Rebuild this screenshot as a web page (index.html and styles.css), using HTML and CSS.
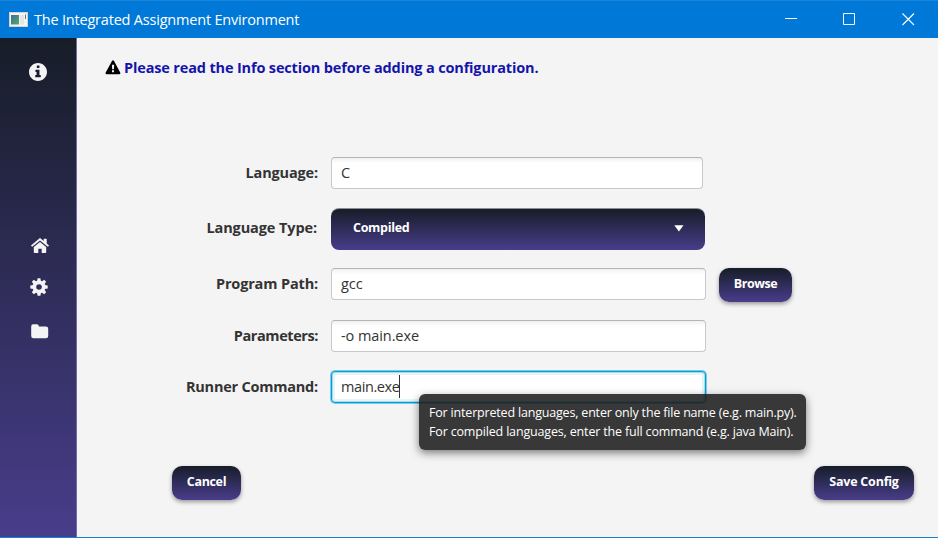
FILE: index.html
```html
<!DOCTYPE html>
<html lang="en">
<head>
<meta charset="utf-8">
<title>The Integrated Assignment Environment</title>
<link rel="stylesheet" href="styles.css">
</head>
<body>
<div class="window">
  <header class="titlebar">
    <svg class="app-icon" width="19" height="15" viewBox="0 0 19 15">
      <defs><linearGradient id="g" x1="0" y1="0" x2="1" y2="1"><stop offset="0" stop-color="#3e6e9e"/><stop offset="1" stop-color="#58a868"/></linearGradient></defs>
      <rect x=".5" y=".5" width="18" height="14" fill="#f4f4f2" stroke="#d5d3cf"/>
      <rect x="2" y="3" width="8" height="9.500" fill="url(#g)"/>
      <rect x="11" y="3" width="4" height="9.500" fill="#e3e5e7"/>
      <path d="M16.500 2.500v4.500" stroke="#4d8d75"/>
    </svg>
    <span class="title">The Integrated Assignment Environment</span>
    <div class="controls">
      <svg width="13" height="13"><path d="M0 5.500h12" stroke="#fff"/></svg>
      <svg width="13" height="13"><path d="M.5.500h11v11h-11z" fill="none" stroke="#fff"/></svg>
      <svg width="13" height="13"><path d="M.5 .5l11.500 11.500M12 .5L.5 12" stroke="#fff" stroke-width="1.100"/></svg>
    </div>
  </header>
  <div class="body">
    <nav class="sidebar">
      <svg class="info" width="18" height="18" viewBox="8 8 496 496"><path fill="#f4f4f4" d="M256 8C119 8 8 119 8 256s111 248 248 248 248-111 248-248S393 8 256 8zm-32 70h72v68h-72zM186 194h110v148h36v62H180v-62h36v-86h-30z"/></svg>
      <svg class="home" width="18" height="16" viewBox="0 0 18 16"><g fill="#f4f4f4"><path d="M9 .3c.4 0 .7.100 1 .4l2.700 2.300V1.300c0-.3.200-.5.500-.5h2c.3 0 .5.200.5.500v4.300l2 1.700c.2.200.2.400.100.600l-.6.700c-.2.200-.5.200-.7 0L9 2.500 1.500 8.600c-.2.200-.5.200-.7 0l-.6-.7c-.2-.2-.1-.5.100-.6L8 .7c.3-.3.600-.4 1-.4z"/><path d="M9 3.900l6.200 5.200v5.200c0 .5-.3.800-.8.800h-3.700v-4.400H7.300v4.400H3.600c-.5 0-.8-.3-.8-.8V9.100z"/></g></svg>
      <svg class="cog" width="18" height="18" viewBox="-9 -9 18 18"><g fill="#f4f4f4"><path fill-rule="evenodd" d="M-6.500 0a6.500 6.500 0 1 0 13 0a6.500 6.500 0 1 0-13 0zm3.700 0a2.800 2.800 0 1 1 5.600 0a2.800 2.800 0 1 1-5.600 0z"/><path id="t" d="M-2-5.500L-1.400-8.700h2.800L2-5.500zM-2 5.500L-1.400 8.700h2.800L2 5.500z"/><use href="#t" transform="rotate(45)"/><use href="#t" transform="rotate(90)"/><use href="#t" transform="rotate(135)"/></g></svg>
      <svg class="folder" width="18" height="15" viewBox="0 0 18 15"><path fill="#f4f4f4" d="M2.200.3h3.600Q7.900.3 7.900 2.400h7Q17.200 2.400 17.200 4.700v7.200Q17.200 14.200 14.900 14.200H2.400Q.2 14.200.2 11.900V2.500Q.2.300 2.200.3z"/></svg>
    </nav>
    <main class="content">
      <div class="notice">
        <svg width="16" height="15" viewBox="0 0 16 15"><path fill-rule="evenodd" d="M7.100.8Q8 -.5 8.900.8l6.300 11.700Q15.900 14 14.300 14.200H1.500Q-.1 14 .7 12.500zM6.900 4.700l.3 4.500h1.700l.3-4.500zM7 10.200v2h2v-2z"/></svg>
        <span class="t-notice">Please read the Info section before adding a configuration.</span>
      </div>
      <form class="form">
        <div class="row lang"><label class="l1">Language:</label><div class="field short"><span>C</span></div></div>
        <div class="row type"><label class="l2">Language Type:</label><div class="combo"><span>Compiled</span><svg width="10" height="7"><path d="M.3.3h9.200L4.900 6.600z" fill="#fff"/></svg></div></div>
        <div class="row path"><label class="l3">Program Path:</label><div class="field"><span>gcc</span></div><div class="btn browse"><span>Browse</span></div></div>
        <div class="row params"><label class="l4">Parameters:</label><div class="field"><span class="v4">-o main.exe</span></div></div>
        <div class="row runner"><label class="l5">Runner Command:</label><div class="field focused"><span class="v5">main.exe</span><i class="caret"></i>
          <div class="tooltip"><div><span class="tip1">For interpreted languages, enter only the file name (e.g. main.py).</span></div><div><span class="tip2">For compiled languages, enter the full command (e.g. java Main).</span></div></div></div></div>
      </form>
      <div class="actions"><div class="btn cancel"><span>Cancel</span></div><div class="btn save"><span>Save Config</span></div></div>
    </main>
  </div>
</div>
</body>
</html>
```
FILE: styles.css
```css
* { box-sizing: border-box; }
body { margin: 0; font-family: "Open Sans", "Noto Sans", sans-serif; font-size: 14.5px; color: #333; }
svg { display: block; flex: none; }
span, label { white-space: nowrap; }
.window { width: 938px; height: 538px; display: flex; flex-direction: column; background: #f4f4f4; border-bottom: 1px solid #1a80d0; overflow: hidden; }
.titlebar { height: 38px; flex: none; display: flex; align-items: center; padding-left: 9px; background: #0078d7; border-top: 1px solid #1a86db; color: #fff; }
.title { margin-left: 6px; font-size: 14.5px; letter-spacing: -.2px; }
.controls { display: flex; gap: 45px; margin-left: auto; padding-right: 24px; }
.controls svg:last-child { margin-left: 1px; margin-right: -1px; }
.body { flex: 1; display: flex; min-height: 0; }
.sidebar { width: 77px; flex: none; display: flex; flex-direction: column; align-items: flex-start; padding: 25px 0 0 30px; background: linear-gradient(#171d28, #483d8b); border-right: 1px solid #7468a6; }
.info { margin-left: -1px; }
.home { margin: 157px 0 0 1px; }
.cog { margin: 24px 0 0 0; }
.folder { margin: 28px 0 0 1px; }
.content { flex: 1; min-width: 0; }
.notice { height: 60px; display: flex; align-items: center; padding: 0 0 2px 28px; gap: 3px; color: #1414ac; font-weight: 700; letter-spacing: -.155px; }
.notice svg { fill: #000; }
.form { padding-top: 59px; }
.row { display: flex; align-items: center; height: 32px; }
label { width: 241px; margin-right: 13px; padding-bottom: 2px; text-align: right; font-weight: 700; }
.l1, .l3 { letter-spacing: -.15px; }
.l2 { letter-spacing: -.1px; padding: 0 1px 3px 0; }
.l4 { letter-spacing: -.42px; }
.l5 { letter-spacing: -.22px; }
.field { position: relative; width: 375px; height: 32px; display: flex; align-items: center; padding: 0 0 2px 9px; background: linear-gradient(#f0f0f0, #fff 5px); border: 1px solid #c8c8c8; border-top-color: #b5b5b5; border-radius: 4px; }
.v4 { letter-spacing: -.08px; }
.v5 { letter-spacing: -.4px; }
.short { width: 372px; }
.type { height: 42px; margin-top: 19px; }
.path { margin-top: 18px; }
.params { margin-top: 20px; }
.runner { margin-top: 19px; }
.combo { width: 374px; height: 42px; display: flex; align-items: center; justify-content: space-between; padding: 0 21px 3px 22px; border-radius: 8px; color: #fff; font-size: 12.5px; font-weight: 700; letter-spacing: -.3px; background: linear-gradient(#171d28, #483d8b); border-top: 1px solid #8b8e92; }
.combo span { margin-top: -2px; }
.btn { height: 34px; display: flex; align-items: center; justify-content: center; border-radius: 10px; color: #fff; font-size: 12.5px; font-weight: 700; padding-bottom: 3px; background: linear-gradient(#171d28, #483d8b); box-shadow: 0 2px 4px rgba(0,0,0,.38); }
.browse { width: 73px; margin-left: 13px; align-self: flex-start; letter-spacing: -.45px; }
.focused { background: #fff; border: 1px solid #039ed3; box-shadow: 0 0 0 1px #7bcbe6, inset 0 0 0 1px #a5dcee, inset 0 0 0 3px #e4f5fa; }
.caret { width: 1.5px; height: 23px; margin-left: -1px; background: #333; }
.tooltip { position: absolute; z-index: 2; left: 87px; top: 22px; width: 387px; height: 56px; padding: 9px 10px; border-radius: 6px; background: rgba(30,30,30,.88); box-shadow: 0 3px 8px rgba(0,0,0,.5); color: #fff; font-size: 12.5px; line-height: 19px; letter-spacing: -.165px; }
.tip1 { letter-spacing: -.185px; }
.actions { display: flex; justify-content: space-between; padding: 63px 24px 0 95px; }
.cancel { width: 69px; letter-spacing: -.35px; }
.save { width: 100px; letter-spacing: -.22px; }
```
